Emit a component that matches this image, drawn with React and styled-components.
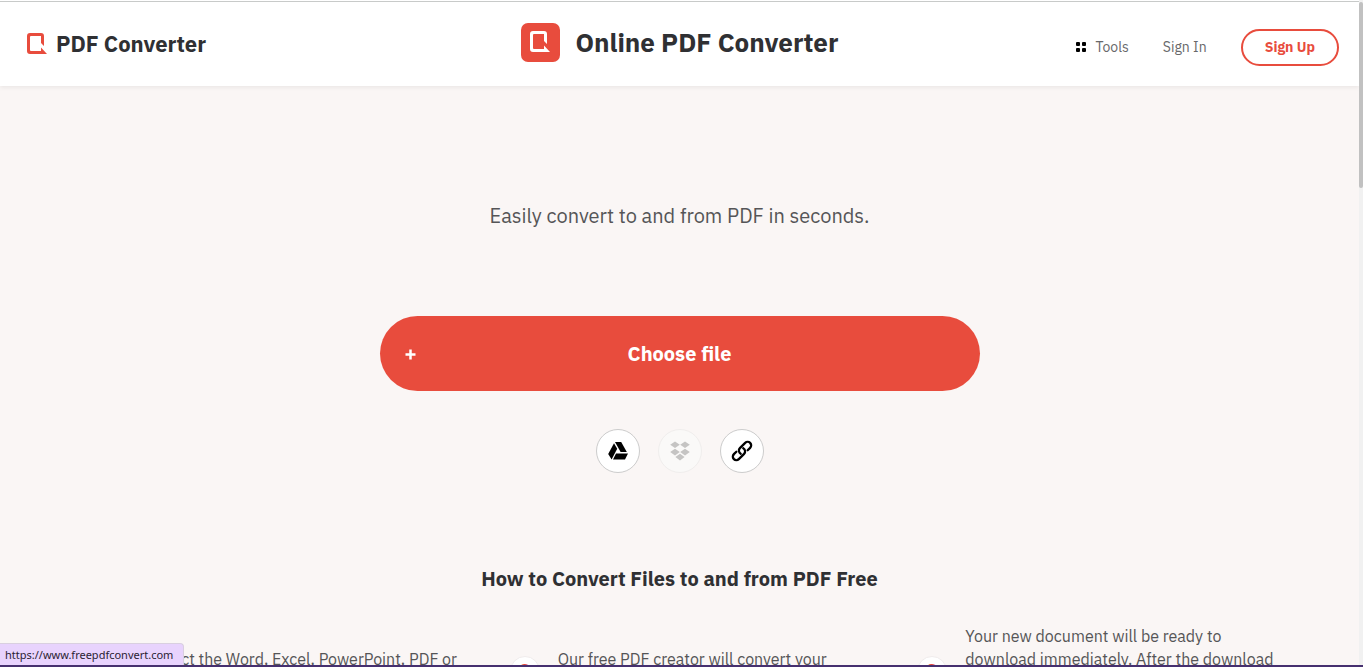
import React from 'react'
import styled, { createGlobalStyle } from 'styled-components'

const GlobalStyle = createGlobalStyle`
  * {
    box-sizing: border-box;
  }

  body {
    margin: 0;
    overflow: hidden;
    background: #faf6f5;
    color: #555557;
    font-family: 'IBM Plex Sans', 'Noto Sans', sans-serif;
    font-size: 16px;
  }
`

const Page = styled.div`
  position: relative;
  display: flex;
  height: 100vh;
  overflow: hidden;
  border-bottom: 2px solid #46306f;
`

const Content = styled.div`
  flex: 1;
  min-width: 0;
  overflow: hidden;
`

const ScrollTrack = styled.div`
  flex: none;
  width: 4px;
  padding-top: 2px;
  background: #f1f1f1;
`

const ScrollThumb = styled.div`
  height: 28%;
  border-radius: 2px;
  background: #c1c1c1;
`

const TopEdge = styled.div`
  height: 2px;
  background: #fff;
  border-bottom: 1px solid #c9cbca;
`

const Header = styled.header`
  display: grid;
  grid-template-columns: 1fr auto 1fr;
  align-items: center;
  height: 84px;
  padding: 0 20px;
  background: #fff;
  box-shadow: 0 2px 4px rgba(0, 0, 0, 0.06);
`

const Brand = styled.a`
  display: flex;
  align-items: center;
  gap: 8px;
  padding-left: 6px;
  color: #2f3033;
  font-size: 22px;
  font-weight: 700;
  line-height: 26px;
  text-decoration: none;
`

const Title = styled.h1`
  display: flex;
  align-items: center;
  gap: 16px;
  margin: 0;
  padding-bottom: 4px;
  color: #2f3033;
  font-size: 26px;
  font-weight: 700;
`

const TitleBadge = styled.span`
  display: grid;
  place-items: center;
  width: 39px;
  height: 39px;
  border-radius: 7px;
  background: #e84c3d;
`

const Nav = styled.nav`
  display: flex;
  align-items: center;
  justify-content: flex-end;
  gap: 34px;
  padding-top: 6px;
`

const NavLink = styled.a`
  display: flex;
  align-items: center;
  gap: 8px;
  color: #68686a;
  font-size: 14px;
  font-weight: 400;
  text-decoration: none;
`

const SignUp = styled.a`
  padding: 7px 22px;
  border: 2px solid #e84c3d;
  border-radius: 19px;
  color: #e84c3d;
  font-size: 14px;
  font-weight: 700;
  line-height: 19px;
  text-decoration: none;
`

const Main = styled.main`
  display: flex;
  flex-direction: column;
  align-items: center;
  padding-top: 116px;
`

const Lead = styled.p`
  margin: 0;
  font-size: 20px;
  font-weight: 400;
  line-height: 28px;
`

const ChooseButton = styled.button`
  display: grid;
  grid-template-columns: 12px 1fr 12px;
  align-items: center;
  width: 600px;
  max-width: 100%;
  height: 75px;
  margin-top: 86px;
  padding: 0 25px;
  border: 0;
  border-radius: 38px;
  background: #e84c3d;
  color: #fff;
  font-family: inherit;
  font-size: 20px;
  font-weight: 700;
`

const Sources = styled.div`
  display: flex;
  gap: 18px;
  margin-top: 38px;
`

const SourceButton = styled.button`
  display: grid;
  place-items: center;
  width: 44px;
  height: 44px;
  padding: 0;
  border: 1px solid #ccc;
  border-radius: 50%;
  background: #fff;
  color: #000;

  &:disabled {
    border-color: #f0eeed;
    background: #faf9f8;
    color: #c5c4c3;
  }
`

const HowTo = styled.h2`
  margin: 92px 0 0;
  color: #2f3033;
  font-size: 20px;
  font-weight: 700;
  line-height: 28px;
`

const Steps = styled.ol`
  display: grid;
  grid-template-columns: repeat(3, 1fr);
  width: 90%;
  margin: 32px 0 0;
  padding: 0;
  list-style: none;
`

const Step = styled.li`
  display: flex;
  align-items: center;
  gap: 18px;
  padding-left: 34px;
`

const StepNumber = styled.span`
  flex: none;
  width: 30px;
  height: 30px;
  border: 1px solid #f0ecec;
  border-radius: 50%;
  background: #fff;
  color: #e84c3d;
  font-size: 20px;
  font-weight: 600;
  line-height: 28px;
  text-align: center;
`

const StepText = styled.p`
  margin: 0;
  font-size: 16px;
  font-weight: 400;
  line-height: 23px;
`

const StatusBar = styled.div`
  position: absolute;
  bottom: 0;
  left: 0;
  padding: 0 10px 0 5px;
  border-top: 1px solid #d9cfe0;
  border-right: 1px solid #d9cfe0;
  border-radius: 0 4px 0 0;
  background: #e8d3fd;
  color: #2b2233;
  font-family: 'Noto Sans', sans-serif;
  font-size: 11px;
  line-height: 21px;
`

const LogoMark = ({ size, color }) => (
  <svg width={size} height={size} viewBox="0 0 22 22" fill={color} aria-hidden="true">
    <path d="M4 0h11q3 0 3 3v10l-3-3V3H5Q4 3 4 4v13q0 1 1 1h10v-3.500l6 6.500H4q-3 0-3-3V3q0-3 3-3z" />
  </svg>
)

const ToolsIcon = () => (
  <svg width="12" height="12" viewBox="0 0 12 12" aria-hidden="true">
    <rect x="1" y="1" width="4" height="4" rx="1" />
    <rect x="7" y="1" width="4" height="4" rx="1" />
    <rect x="1" y="7" width="4" height="4" rx="1" />
    <rect x="7" y="7" width="4" height="4" rx="1" />
  </svg>
)

const PlusIcon = () => (
  <svg width="12" height="12" viewBox="0 0 12 12" fill="none" stroke="currentColor" strokeWidth="2.500" aria-hidden="true">
    <path d="M5.500 1.500v10M.5 6.500h10" />
  </svg>
)

const DriveIcon = () => (
  <svg width="22" height="20" viewBox="0 0 22 20" fill="currentColor" aria-hidden="true">
    <path d="M8 1h6.200l5.600 10h-6.200z" />
    <path d="M7 2.200l3.200 5.600L4.600 18.500 1.200 13z" />
    <path d="M9 12.500h12L18 18.500H6z" />
  </svg>
)

const DropboxIcon = () => (
  <svg width="20" height="20" viewBox="0 0 20 20" fill="currentColor" aria-hidden="true">
    <path d="M5 .5l4.800 3.300L5 7.100.2 3.800zM15 .5l4.800 3.300L15 7.100l-4.800-3.300zM5 7.800l4.800 3.300L5 14.400.2 11.100zM15 7.800l4.800 3.300-4.800 3.300-4.800-3.300zM10 12.800l4.600 3.200-4.600 3.500L5.400 16z" />
  </svg>
)

const LinkIcon = () => (
  <svg width="24" height="24" viewBox="-12 -12 24 24" fill="none" stroke="currentColor" strokeWidth="2.300" strokeLinecap="round" aria-hidden="true">
    <g transform="rotate(-45)">
      <path d="M4.500 3.500H8a3.500 3.500 0 0 0 0-7H.5a3.500 3.500 0 0 0-3.300 4.500" />
      <path d="M-4.500-3.500H-8a3.500 3.500 0 0 0 0 7H-.5a3.500 3.500 0 0 0 3.300-4.500" />
    </g>
  </svg>
)

const App = () => (
  <Page>
    <GlobalStyle />
    <Content>
      <TopEdge />
      <Header>
        <Brand href="#home">
          <LogoMark size={22} color="#e84c3d" />
          PDF Converter
        </Brand>
        <Title>
          <TitleBadge>
            <LogoMark size={22} color="#fff" />
          </TitleBadge>
          Online PDF Converter
        </Title>
        <Nav>
          <NavLink href="#tools">
            <ToolsIcon />
            Tools
          </NavLink>
          <NavLink href="#signin">Sign In</NavLink>
          <SignUp href="#signup">Sign Up</SignUp>
        </Nav>
      </Header>
      <Main>
        <Lead>Easily convert to and from PDF in seconds.</Lead>
        <ChooseButton type="button">
          <PlusIcon />
          <span>Choose file</span>
        </ChooseButton>
        <Sources>
          <SourceButton type="button" aria-label="Google Drive">
            <DriveIcon />
          </SourceButton>
          <SourceButton type="button" aria-label="Dropbox" disabled>
            <DropboxIcon />
          </SourceButton>
          <SourceButton type="button" aria-label="Link">
            <LinkIcon />
          </SourceButton>
        </Sources>
        <HowTo>How to Convert Files to and from PDF Free</HowTo>
        <Steps>
          <Step>
            <StepNumber>1</StepNumber>
            <StepText>
              Select the Word, Excel, PowerPoint, PDF or
              <br />
              other file
            </StepText>
          </Step>
          <Step>
            <StepNumber>2</StepNumber>
            <StepText>
              Our free PDF creator will convert your
              <br />
              file
            </StepText>
          </Step>
          <Step>
            <StepNumber>3</StepNumber>
            <StepText>
              Your new document will be ready to
              <br />
              download immediately. After the download
              <br />
              your file
              <br />
              is deleted
            </StepText>
          </Step>
        </Steps>
      </Main>
    </Content>
    <ScrollTrack>
      <ScrollThumb />
    </ScrollTrack>
    <StatusBar>https://www.freepdfconvert.com</StatusBar>
  </Page>
)

export default App
